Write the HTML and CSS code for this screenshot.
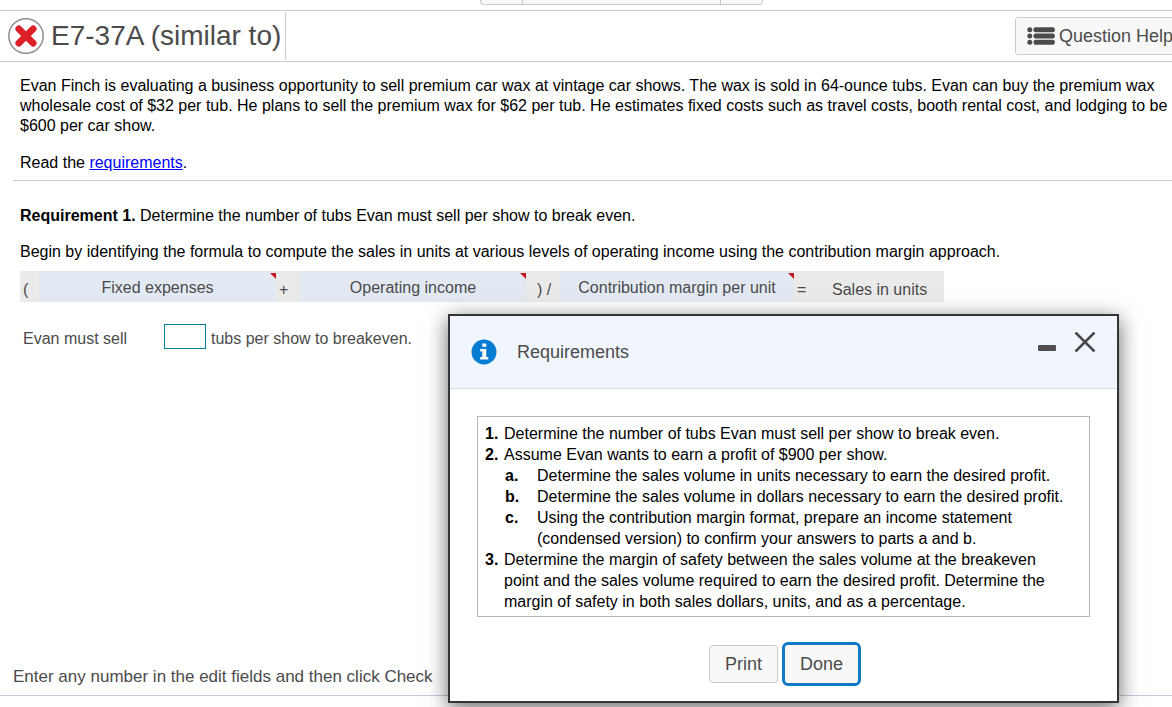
FILE: index.html
```html
<!DOCTYPE html>
<html lang="en">
<head>
  <meta charset="UTF-8">
  <meta name="viewport" content="width=device-width, initial-scale=1">
  <title>E7-37A (similar to)</title>
  <link rel="stylesheet" href="styles.css">
</head>
<body>
<div class="topnav">
  <div class="tabs">
    <span class="tab tab-side"></span>
    <span class="tab tab-main"></span>
    <span class="tab tab-side"></span>
  </div>
</div>

<header class="header">
  <div class="title">
    <svg class="status" viewBox="0 0 36 36" aria-hidden="true">
      <circle cx="18" cy="18" r="17.2" fill="#fff" stroke="#8f8f8f" stroke-width="1.5"/>
      <path d="M10.8 10.8 L25.2 25.2 M25.2 10.8 L10.8 25.2" stroke="#dd1f28" stroke-width="6.8" stroke-linecap="round"/>
    </svg>
    <h1>E7-37A (similar to)</h1>
  </div>
  <button type="button" class="btn help">
    <svg viewBox="0 0 28 18" aria-hidden="true">
      <g fill="#4b4b4b">
        <circle cx="2.8" cy="2.8" r="2.5"/>
        <circle cx="2.8" cy="9" r="2.5"/>
        <circle cx="2.8" cy="15.2" r="2.5"/>
        <rect x="6.5" y="0.3" width="21.3" height="5" rx="2"/>
        <rect x="6.5" y="6.5" width="21.3" height="5" rx="2"/>
        <rect x="6.5" y="12.7" width="21.3" height="5" rx="2"/>
      </g>
    </svg>
    <span>Question Help</span>
  </button>
</header>

<main class="main">
  <section class="problem">
    <p>Evan Finch is evaluating a business opportunity to sell premium car wax at vintage car shows. The wax is sold in 64-ounce tubs. Evan can buy the premium wax<br>
      wholesale cost of $32 per tub. He plans to sell the premium wax for $62 per tub. He estimates fixed costs such as travel costs, booth rental cost, and lodging to be<br>
      $600 per car show.</p>
    <p>Read the <a href="#requirements">requirements</a>.</p>
  </section>

  <section class="work">
    <p><b>Requirement 1.</b> Determine the number of tubs Evan must sell per show to break even.</p>
    <p>Begin by identifying the formula to compute the sales in units at various levels of operating income using the contribution margin approach.</p>
    <div class="formula">
      <span class="op op-open">(</span>
      <span class="term term-fixed">Fixed expenses</span>
      <span class="op op-plus">+</span>
      <span class="term term-income">Operating income</span>
      <span class="op op-divide">) /</span>
      <span class="term term-margin">Contribution margin per unit</span>
      <span class="op op-equals">=</span>
      <span class="result">Sales in units</span>
    </div>
    <div class="answer">
      <label for="tubs">Evan must sell</label>
      <input type="text" id="tubs">
      <span>tubs per show to breakeven.</span>
    </div>
  </section>
</main>

<footer class="footer">Enter any number in the edit fields and then click Check</footer>
<div class="bottom"></div>

<div class="dialog" id="requirements" role="dialog" aria-labelledby="dialog-title">
  <div class="dialog-head">
    <svg class="info" viewBox="0 0 26 26" aria-hidden="true">
      <circle cx="13" cy="13" r="12.5" fill="#057bd1"/>
      <path d="M11.3 4.4h4v3.4h-4z M9.2 10h6.1v8h2v2.4H9.2V18h2.1v-5.6H9.2z" fill="#fff"/>
    </svg>
    <h2 id="dialog-title">Requirements</h2>
    <button type="button" class="icon-btn minimize" aria-label="Minimize">
      <svg viewBox="0 0 18 6"><rect width="18" height="6" rx="1" fill="#4f4f51"/></svg>
    </button>
    <button type="button" class="icon-btn close" aria-label="Close">
      <svg viewBox="0 0 22 20"><path d="M1.5 0.5 L20.5 19.5 M20.5 0.5 L1.5 19.5" stroke="#48484a" stroke-width="2.6"/></svg>
    </button>
  </div>
  <div class="dialog-body">
    <ol class="reqs">
      <li><b>1.</b><span>Determine the number of tubs Evan must sell per show to break even.</span></li>
      <li><b>2.</b><span>Assume Evan wants to earn a profit of $900 per show.</span></li>
      <li class="sub"><b>a.</b><span>Determine the sales volume in units necessary to earn the desired profit.</span></li>
      <li class="sub"><b>b.</b><span>Determine the sales volume in dollars necessary to earn the desired profit.</span></li>
      <li class="sub"><b>c.</b><span>Using the contribution margin format, prepare an income statement<br>(condensed version) to confirm your answers to parts a and b.</span></li>
      <li><b>3.</b><span>Determine the margin of safety between the sales volume at the breakeven<br>point and the sales volume required to earn the desired profit. Determine the<br>margin of safety in both sales dollars, units, and as a percentage.</span></li>
    </ol>
    <div class="actions">
      <button type="button" class="btn">Print</button>
      <button type="button" class="btn done">Done</button>
    </div>
  </div>
</div>
</body>
</html>
```
FILE: styles.css
```css
* {
  box-sizing: border-box;
  margin: 0;
  padding: 0;
}

body {
  display: flex;
  flex-direction: column;
  position: relative;
  min-height: 100vh;
  overflow: hidden;
  background: #fff;
  color: #000;
  font: 16px/20px "Liberation Sans", Arial, sans-serif;
}

button, input {
  font: inherit;
}

/* top bar */
.topnav {
  height: 11px;
  border-bottom: 1px solid #c8c9dc;
}

.tabs {
  display: flex;
  width: 283px;
  height: 5px;
  margin-left: 480px;
  border: 1px solid #cacaca;
  border-top: 0;
  border-radius: 0 0 4px 4px;
  background: #f7f7f7;
}

.tab-side {
  width: 41px;
}

.tab-main {
  flex: 1;
  border: 1px solid #c6c6c6;
  border-width: 0 1px;
}

.header {
  display: flex;
  justify-content: space-between;
  height: 51px;
  border-bottom: 1px solid #c8c9dc;
}

.title {
  display: flex;
  align-items: center;
  gap: 7px;
  height: 48px;
  margin-top: 1px;
  padding: 0 4px 0 8px;
  border-right: 1px solid #c8c9dc;
}

.title h1 {
  color: #4b4b4b;
  font-size: 28px;
  font-weight: normal;
  white-space: nowrap;
}

.status {
  width: 36px;
  height: 36px;
}

.btn {
  height: 38px;
  padding: 0 15px;
  border: 1px solid #cbcbcb;
  border-radius: 3px;
  background: #f8f8f8;
  color: #4b4b4b;
  font-size: 18px;
}

.help {
  display: flex;
  flex: none;
  align-items: center;
  gap: 4px;
  margin: 6px -17px 0 0;
  padding: 0 15px 0 11px;
  white-space: nowrap;
}

.help svg {
  width: 28px;
  height: 18px;
}

/* problem text */
.main {
  flex: 1;
}

.problem {
  margin-left: 13px;
  padding: 14px 0 7px 7px;
  border-bottom: 1px solid #c8c9dc;
  white-space: nowrap;
}

.problem p + p {
  margin-top: 17px;
}

.problem a {
  color: #00f;
}

.work {
  padding: 25px 20px 0;
}

.work p {
  margin-bottom: 16px;
}

.work p + p {
  margin-bottom: 9px;
}

.formula {
  display: flex;
  width: fit-content;
  height: 31px;
  background: #eaeaea;
  color: #4b4b4b;
  line-height: 34px;
  white-space: nowrap;
}

.op {
  padding: 2px 3px 0;
}

.op-open {
  width: 19px;
}

.op-plus {
  width: 24px;
}

.op-divide {
  width: 34px;
  padding-left: 11px;
}

.op-equals {
  width: 38px;
}

.term {
  position: relative;
  background: #e2e9f3;
  text-align: center;
}

.term::after {
  content: "";
  position: absolute;
  top: 2px;
  right: 0;
  border-top: 6px solid #c4161c;
  border-left: 6px solid transparent;
}

.term-fixed {
  width: 237px;
}

.term-income {
  width: 226px;
}

.term-margin {
  width: 234px;
}

.result {
  padding: 2px 17px 0 0;
}

.answer {
  display: flex;
  align-items: flex-end;
  margin-top: 22px;
  padding-left: 3px;
  color: #4b4b4b;
}

.answer label {
  width: 141px;
}

.answer input {
  width: 42px;
  height: 25px;
  margin-right: 5px;
  padding: 0 4px;
  border: 1px solid #037f9f;
}

.footer {
  padding: 0 13px 8px;
  border-bottom: 1px solid #c8c9dc;
  color: #4b4b4b;
  font-size: 17px;
}

.bottom {
  height: 11px;
}

/* requirements window */
.dialog {
  position: absolute;
  top: 314px;
  left: 448px;
  width: 671px;
  border: 2px solid #343436;
  background: #fff;
  box-shadow: 0 5px 20px rgba(0, 0, 0, .6);
}

.dialog-head {
  display: flex;
  align-items: center;
  height: 73px;
  padding: 0 21px;
  border-bottom: 1px solid #cbe0ee;
  background: #f1f6fe;
}

.dialog-head h2 {
  flex: 1;
  margin-left: 20px;
  color: #4b4b4b;
  font-size: 18px;
  font-weight: normal;
}

.info {
  width: 26px;
  height: 26px;
}

.icon-btn {
  align-self: flex-start;
  border: 0;
  background: none;
}

.icon-btn svg {
  display: block;
}

.minimize {
  padding-top: 29px;
}

.minimize svg {
  width: 18px;
  height: 6px;
}

.close {
  margin-left: 18px;
  padding-top: 16px;
}

.close svg {
  width: 22px;
  height: 20px;
}

.dialog-body {
  padding: 27px;
  padding-bottom: 15px;
}

.reqs {
  padding: 6px 7px 4px;
  border: 1px solid #b5b5b5;
  line-height: 21px;
  list-style: none;
  white-space: nowrap;
}

.reqs li {
  display: flex;
}

.reqs b {
  width: 19px;
}

.reqs .sub {
  padding-left: 20px;
}

.reqs .sub b {
  width: 32px;
}

.actions {
  display: flex;
  align-items: center;
  justify-content: center;
  gap: 4px;
  margin-top: 25px;
  padding-left: 3px;
}

.done {
  height: 44px;
  border: 3px solid #1079c7;
  border-radius: 6px;
}
```
